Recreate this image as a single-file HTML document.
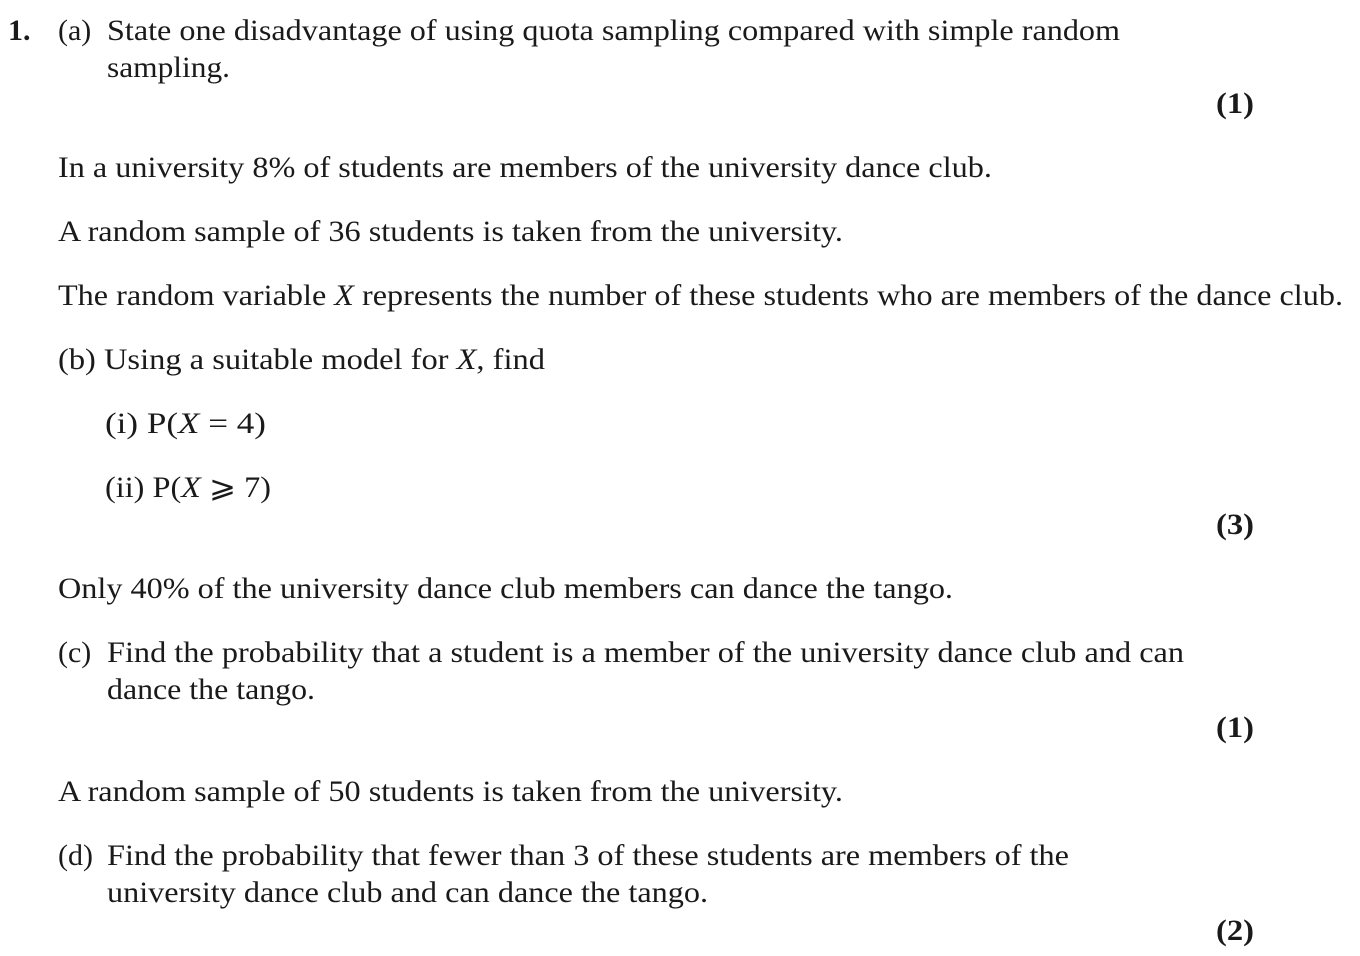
<!DOCTYPE html>
<html><head><meta charset="utf-8"><style>
html,body{margin:0;padding:0;background:#fff;}
svg{display:block}
text{font-family:"Liberation Serif","Times New Roman",serif;font-size:30px;fill:#1a1a1a;}
.b{font-weight:bold}
</style></head><body>
<svg width="1360" height="956" viewBox="0 0 1360 956" xmlns="http://www.w3.org/2000/svg">
<text class="b" x="8" y="40">1.</text>
<text x="58" y="40">(a)</text>
<text x="107" y="40" textLength="1013" lengthAdjust="spacingAndGlyphs">State one disadvantage of using quota sampling compared with simple random</text>
<text x="107" y="77" textLength="123" lengthAdjust="spacingAndGlyphs">sampling.</text>
<text class="b" x="1216" y="113" textLength="38" lengthAdjust="spacingAndGlyphs">(1)</text>
<text x="58" y="177" textLength="934" lengthAdjust="spacingAndGlyphs">In a university 8% of students are members of the university dance club.</text>
<text x="58" y="241" textLength="785" lengthAdjust="spacingAndGlyphs">A random sample of 36 students is taken from the university.</text>
<text x="58" y="305" textLength="1285" lengthAdjust="spacingAndGlyphs">The random variable <tspan font-style="italic">X</tspan> represents the number of these students who are members of the dance club.</text>
<text x="58" y="369" textLength="487" lengthAdjust="spacingAndGlyphs">(b) Using a suitable model for <tspan font-style="italic">X</tspan>, find</text>
<text x="105" y="433" textLength="161" lengthAdjust="spacingAndGlyphs">(i)  P(<tspan font-style="italic">X</tspan> = 4)</text>
<text x="105" y="497" textLength="166" lengthAdjust="spacingAndGlyphs">(ii) P(<tspan font-style="italic">X</tspan> ⩾ 7)</text>
<text class="b" x="1216" y="534" textLength="38" lengthAdjust="spacingAndGlyphs">(3)</text>
<text x="58" y="598" textLength="895" lengthAdjust="spacingAndGlyphs">Only 40% of the university dance club members can dance the tango.</text>
<text x="58" y="662">(c)</text>
<text x="107" y="662" textLength="1077" lengthAdjust="spacingAndGlyphs">Find the probability that a student is a member of the university dance club and can</text>
<text x="107" y="699" textLength="208" lengthAdjust="spacingAndGlyphs">dance the tango.</text>
<text class="b" x="1216" y="737" textLength="38" lengthAdjust="spacingAndGlyphs">(1)</text>
<text x="58" y="801" textLength="785" lengthAdjust="spacingAndGlyphs">A random sample of 50 students is taken from the university.</text>
<text x="58" y="865">(d)</text>
<text x="107" y="865" textLength="962" lengthAdjust="spacingAndGlyphs">Find the probability that fewer than 3 of these students are members of the</text>
<text x="107" y="902" textLength="601" lengthAdjust="spacingAndGlyphs">university dance club and can dance the tango.</text>
<text class="b" x="1216" y="940" textLength="38" lengthAdjust="spacingAndGlyphs">(2)</text>
</svg>
</body></html>
